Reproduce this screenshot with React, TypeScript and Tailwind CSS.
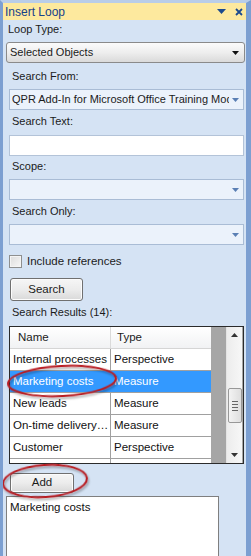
import React from "react";

const font = { fontFamily: '"Liberation Sans", Arial, sans-serif' };

const Label = ({ text, className = "" }: { text: string; className?: string }) => (
  <div className={`h-[14px] text-[11px] leading-[14px] text-[#1b1b1b] ${className}`}>{text}</div>
);

const FlatSelect = ({ value, className = "" }: { value?: string; className?: string }) => (
  <div
    className={`flex h-[21px] items-center justify-between border border-[#a9bcd5] bg-[#ebf2fb] pl-[2px] pr-[4px] ${className}`}
  >
    <span className="overflow-hidden whitespace-nowrap text-[11px] text-[#1b1b1b]">{value}</span>
    <svg width="7" height="4" viewBox="0 0 7 4" className="ml-[3px] shrink-0">
      <path d="M0 0h7L3.5 4z" fill="#5a7fb4" />
    </svg>
  </div>
);

const Button = ({ label, className = "" }: { label: string; className?: string }) => (
  <div
    className={`flex items-center justify-center rounded-[3px] border border-[#707070] bg-gradient-to-b from-[#f6f6f6] via-[#ececec] to-[#d9d9d9] text-[11.5px] text-[#1b1b1b] shadow-[inset_0_0_0_1px_#fcfcfc] ${className}`}
  >
    {label}
  </div>
);

const rows = [
  ["Internal processes", "Perspective"],
  ["Marketing costs", "Measure"],
  ["New leads", "Measure"],
  ["On-time delivery…", "Measure"],
  ["Customer", "Perspective"],
];

export default function App() {
  return (
    <div
      style={font}
      className="relative flex h-[556px] w-[251px] flex-col overflow-hidden border-l-[3px] border-r-[5px] border-t-[3px] border-l-[#7c9fd1] border-r-[#7c9fd1] border-t-[#b9cde8] bg-[#d5e3f4] [&>*]:shrink-0"
    >
      {/* title bar */}
      <div className="flex h-[17px] items-center justify-between bg-[#fde99e] pl-[2px] pr-[3px]">
        <span className="text-[12px] text-[#15428b]">Insert Loop</span>
        <div className="flex items-center gap-[9px]">
          <svg width="9" height="5" viewBox="0 0 9 5">
            <path d="M0 0h9L4.5 5z" fill="#1c4a8e" />
          </svg>
          <svg width="8" height="8" viewBox="0 0 8 8">
            <path d="M1 1l6 6M7 1L1 7" stroke="#1c4a8e" strokeWidth="1.8" />
          </svg>
        </div>
      </div>

      <Label text="Loop Type:" className="ml-[5px] mt-[2px]" />
      <div className="ml-[3px] mr-[1px] mt-[6px] flex h-[21px] items-center justify-between rounded-[3px] border border-[#8a8a8a] bg-gradient-to-b from-[#fbfbfb] via-[#eeeeee] to-[#dadada] pl-[3px] pr-[5px]">
        <span className="text-[11px] text-[#1b1b1b]">Selected Objects</span>
        <svg width="7" height="4" viewBox="0 0 7 4">
          <path d="M0 0h7L3.5 4z" fill="#111" />
        </svg>
      </div>

      <Label text="Search From:" className="ml-[9px] mt-[6px]" />
      <FlatSelect value="QPR Add-In for Microsoft Office Training Model" className="ml-[6px] mr-[2px] mt-[6px]" />

      <Label text="Search Text:" className="ml-[9px] mt-[4px]" />
      <div className="ml-[6px] mr-[2px] mt-[7px] h-[21px] border border-[#b3c3d8] bg-white" />

      <Label text="Scope:" className="ml-[9px] mt-[3px]" />
      <FlatSelect className="ml-[6px] mr-[2px] mt-[6px]" />

      <Label text="Search Only:" className="ml-[9px] mt-[4px]" />
      <FlatSelect className="ml-[6px] mr-[2px] mt-[6px]" />

      <div className="ml-[6px] mt-[10px] flex h-[13px] items-center gap-[5px]">
        <div className="h-[13px] w-[13px] border border-[#8e8f8f] bg-gradient-to-br from-[#dcdcdc] to-[#f7f7f7] shadow-[inset_0_0_0_1px_#f4f4f4]" />
        <span className="text-[11.5px] text-[#1b1b1b]">Include references</span>
      </div>

      <Button label="Search" className="ml-[7px] mt-[10px] h-[23px] w-[73px]" />

      <Label text="Search Results (14):" className="ml-[9px] mt-[4px]" />

      {/* results grid */}
      <div className="ml-[6px] mr-[2px] mt-[7px] flex h-[138px] border border-[#2b2b2b] bg-[#a6a6a6]">
        <div className="flex w-[201px] flex-col">
          <div className="flex h-[22px] shrink-0 border-b border-[#d5d5d5] bg-gradient-to-b from-white to-[#f1f2f4] text-[11.5px] text-[#1b1b1b]">
            <div className="flex w-[101px] items-center border-r border-[#dadada] pl-[8px]">Name</div>
            <div className="flex flex-1 items-center pl-[6px]">Type</div>
          </div>
          {rows.map(([name, type]) => {
            const sel = name === "Marketing costs";
            return (
              <div
                key={name}
                className={`flex h-[22px] shrink-0 border-b border-[#a0a0a0] text-[11.5px] ${sel ? "bg-[#3399ff] text-white" : "bg-white text-[#111]"}`}
              >
                <div className={`flex w-[101px] items-center border-r pl-[3px] ${sel ? "border-[#3399ff]" : "border-[#a0a0a0]"}`}>{name}</div>
                <div className="flex flex-1 items-center pl-[3px]">{type}</div>
              </div>
            );
          })}
          <div className="flex flex-1 bg-white">
            <div className="w-[101px] border-r border-[#a0a0a0]" />
          </div>
        </div>
        <div className="w-[15px]" />
        <div className="flex w-[16px] flex-col items-center border-l border-[#e3e3e3] bg-gradient-to-r from-[#ececec] to-[#f7f7f7]">
          <svg width="7" height="4" viewBox="0 0 7 4" className="mt-[6px]">
            <path d="M0 4h7L3.5 0z" fill="#333" />
          </svg>
          <div className="mt-[51px] flex h-[35px] w-[14px] flex-col items-center justify-center gap-[2px] rounded-[2px] border border-[#989898] bg-gradient-to-r from-[#f3f3f3] to-[#dedede]">
            <div className="h-px w-[6px] bg-[#666]" />
            <div className="h-px w-[6px] bg-[#666]" />
            <div className="h-px w-[6px] bg-[#666]" />
            <div className="h-px w-[6px] bg-[#666]" />
          </div>
          <div className="flex-1" />
          <svg width="7" height="4" viewBox="0 0 7 4" className="mb-[6px]">
            <path d="M0 0h7L3.5 4z" fill="#333" />
          </svg>
        </div>
      </div>

      <Button label="Add" className="ml-[7px] mt-[9px] h-[20px] w-[64px]" />

      <div className="ml-[3px] mt-[3px] h-[70px] w-[213px] border border-[#7f7f7f] bg-white px-[3px] pt-[3px] text-[11.5px] leading-[14px] text-[#111]">
        Marketing costs
      </div>

      {/* red annotation ellipses */}
      <svg className="pointer-events-none absolute left-[-3px] top-[-3px]" width="251" height="556" viewBox="0 0 251 556">
        <defs>
          <filter id="sh" x="-20%" y="-40%" width="140%" height="180%">
            <feDropShadow dx="1" dy="2" stdDeviation="1.2" floodColor="#000" floodOpacity="0.35" />
          </filter>
        </defs>
        <ellipse cx="62" cy="381" rx="54" ry="15" fill="none" stroke="#b81d24" strokeWidth="2" filter="url(#sh)" transform="rotate(-3 62 381)" />
        <ellipse cx="45" cy="481" rx="42" ry="16" fill="none" stroke="#b81d24" strokeWidth="2" filter="url(#sh)" transform="rotate(-4 45 481)" />
      </svg>
    </div>
  );
}
